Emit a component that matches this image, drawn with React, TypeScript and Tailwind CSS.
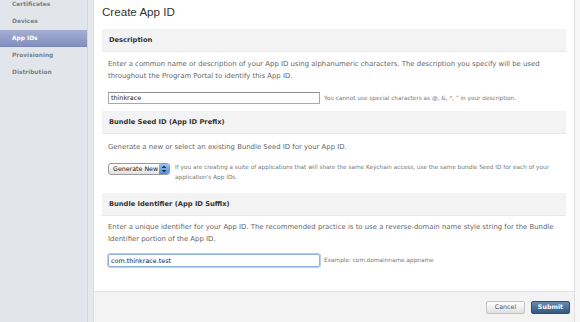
import React from "react";

const navItems = ["Certificates", "Devices", "App IDs", "Provisioning", "Distribution"];

function SectionHeader({ title }: { title: string }) {
  return (
    <div className="flex h-[23px] shrink-0 items-center border-b border-[#e8e8e8] bg-[#f3f3f3] px-[7px] text-[6.7px] font-bold text-[#333]">
      {title}
    </div>
  );
}

export default function App() {
  return (
    <div className="flex h-[322px] w-[580px] overflow-hidden bg-[#e2e6ea] font-['DejaVu_Sans',sans-serif]">
      {/* sidebar */}
      <div className="flex w-[88px] shrink-0 flex-col border-r border-[#d3d7db]">
        <div className="-mt-[4px]">
          {navItems.map((item) => (
            <div
              key={item}
              className={
                item === "App IDs"
                  ? "flex h-[17px] items-center border-b border-[#7b88b6] bg-gradient-to-b from-[#a4afd3] to-[#8390c0] px-[12px] text-[5.9px] font-bold text-white"
                  : "flex h-[17px] items-center px-[12px] text-[5.9px] font-bold text-[#7d8187]"
              }
            >
              {item}
            </div>
          ))}
        </div>
      </div>
      <div className="w-[6px] shrink-0 border-r border-[#d9dde1] bg-[#e6e9ec]" />

      {/* main panel */}
      <div className="flex w-[481px] shrink-0 flex-col border-r border-[#e0e0e0] bg-white">
        <div className="flex flex-1 flex-col px-[8px]">
          <h1 className="flex h-[29px] shrink-0 items-center pb-[5px] font-['Liberation_Sans',sans-serif] text-[11.6px] text-[#333]">
            Create App ID
          </h1>

          <SectionHeader title="Description" />
          <div className="px-[6px] pt-[6px]">
            <p className="text-[6.9px] leading-[12px] text-[#666]">
              Enter a common name or description of your App ID using alphanumeric characters. The description you specify will be used throughout the Program Portal to identify this App ID.
            </p>
            <div className="mt-[10px] flex items-center gap-[4px] pb-[7px]">
              <input
                readOnly
                value="thinkrace"
                className="h-[12px] w-[212px] border border-[#a9a9a9] border-t-[#8f8f8f] px-[2px] text-[6.4px] text-[#222] outline-none"
              />
              <span className="whitespace-nowrap text-[5.75px] text-[#777]">
                You cannot use special characters as @, &amp;, *, " in your description.
              </span>
            </div>
          </div>

          <SectionHeader title="Bundle Seed ID (App ID Prefix)" />
          <div className="px-[6px] pt-[7px]">
            <p className="text-[6.9px] leading-[12px] text-[#666]">
              Generate a new or select an existing Bundle Seed ID for your App ID.
            </p>
            <div className="mt-[9px] flex items-start gap-[5px] pb-[11px]">
              <div className="mt-[1px] flex h-[12px] w-[62px] shrink-0 items-center justify-between rounded-[3px] border border-[#9a9a9a] bg-gradient-to-b from-white to-[#e2e2e2] pl-[4px] text-[6.3px] text-[#222]">
                <span className="whitespace-nowrap">Generate New</span>
                <span className="flex h-full w-[10px] items-center justify-center rounded-r-[2px] bg-gradient-to-b from-[#9cc3f0] to-[#4f8fd9]">
                  <svg width="6" height="8" viewBox="0 0 6 8">
                    <path d="M3 0.5 L5.5 3 H0.5 Z" fill="#1f3550" />
                    <path d="M3 7.5 L5.5 5 H0.5 Z" fill="#1f3550" />
                  </svg>
                </span>
              </div>
              <p className="text-[5.75px] leading-[10px] text-[#777]">
                If you are creating a suite of applications that will share the same Keychain access, use the same bundle Seed ID for each of your application's App IDs.
              </p>
            </div>
          </div>

          <SectionHeader title="Bundle Identifier (App ID Suffix)" />
          <div className="px-[6px] pt-[6px]">
            <p className="text-[6.9px] leading-[11.5px] text-[#666]">
              Enter a unique identifier for your App ID. The recommended practice is to use a reverse-domain name style string for the Bundle Identifier portion of the App ID.
            </p>
            <div className="mt-[9px] flex items-center gap-[4px]">
              <input
                readOnly
                value="com.thinkrace.test"
                className="h-[13px] w-[212px] rounded-[2px] border border-[#8fb0d8] px-[2px] text-[6.4px] text-[#222] shadow-[0_0_0_1px_#b8cfee] outline-none"
              />
              <span className="whitespace-nowrap text-[5.75px] text-[#777]">Example: com.domainname.appname</span>
            </div>
          </div>
        </div>

        {/* footer */}
        <div className="flex h-[31px] shrink-0 items-center justify-end gap-[6px] border-t border-[#e4e4e4] bg-[#f3f3f3] pr-[4px]">
          <button className="h-[13px] w-[39px] rounded-[2px] border border-[#c4c4c4] bg-gradient-to-b from-white to-[#e0e0e0] text-[6.3px] text-[#555]">
            Cancel
          </button>
          <button className="h-[13px] w-[39px] rounded-[2px] border border-[#2f4c6e] bg-gradient-to-b from-[#6a8bb2] to-[#34567f] text-[6.3px] font-bold text-white">
            Submit
          </button>
        </div>
      </div>
      <div className="flex-1 bg-[#f7f7f7]" />
    </div>
  );
}
